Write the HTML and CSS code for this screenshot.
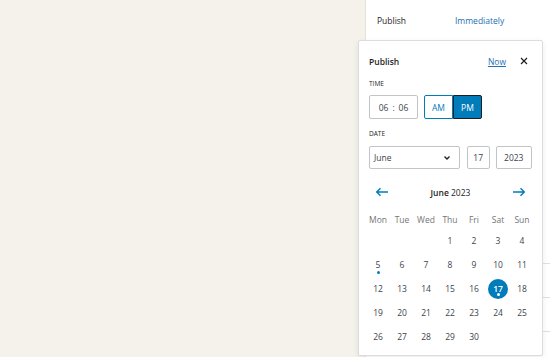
FILE: index.html
```html
<!DOCTYPE html>
<html lang="en">
<head>
  <meta charset="UTF-8" />
  <title>Publish date</title>
  <link rel="stylesheet" href="styles.css">
</head>
<body>
  <div class="editor">
    <div class="canvas"></div>

    <aside class="sidebar">
      <div class="summary-row">
        <span class="summary-label">Publish</span>
        <a class="summary-value" href="#">Immediately</a>
      </div>
      <div class="panel-filler"></div>
      <div class="panel-row"></div>
      <div class="panel-row"></div>
    </aside>

    <!-- date picker popover -->
    <div class="popover">
      <div class="pop-header">
        <h2>Publish</h2>
        <a class="now-link" href="#">Now</a>
        <button class="close-btn">
          <svg width="10" height="10" viewBox="0 0 10 10"><path d="M2 2 L8 8 M8 2 L2 8" stroke="#1e1e1e" stroke-width="1.2"/></svg>
        </button>
      </div>

      <div class="field-label">Time</div>
      <div class="time-row">
        <div class="time-box">
          <span>06</span><span class="colon">:</span><span>06</span>
        </div>
        <div class="ampm">
          <button class="ampm-btn">AM</button>
          <button class="ampm-btn active">PM</button>
        </div>
      </div>

      <div class="field-label">Date</div>
      <div class="date-row">
        <div class="date-box month">
          <span>June</span>
          <svg width="8" height="6" viewBox="0 0 8 6"><path d="M1.5 1.5 L4 4 L6.5 1.5" fill="none" stroke="#1e1e1e" stroke-width="1.3"/></svg>
        </div>
        <div class="date-box day">17</div>
        <div class="date-box year">2023</div>
      </div>

      <div class="cal-nav">
        <svg width="14" height="10" viewBox="0 0 14 10"><path d="M13 5 H2 M5.5 1.2 L1.7 5 L5.5 8.8" fill="none" stroke="#007cba" stroke-width="1.4"/></svg>
        <div class="cal-title"><strong>June</strong> 2023</div>
        <svg width="14" height="10" viewBox="0 0 14 10"><path d="M1 5 H12 M8.5 1.2 L12.3 5 L8.5 8.8" fill="none" stroke="#007cba" stroke-width="1.4"/></svg>
      </div>

      <div class="cal-grid weekdays">
        <span>Mon</span><span>Tue</span><span>Wed</span><span>Thu</span><span>Fri</span><span>Sat</span><span>Sun</span>
      </div>
      <div class="cal-grid days" id="days"></div>
    </div>
  </div>

  <script>
    const days = document.getElementById('days');
    // June 2023 starts on a Thursday
    for (let i = 0; i < 3; i++) {
      days.appendChild(document.createElement('span'));
    }
    for (let d = 1; d <= 30; d++) {
      const cell = document.createElement('span');
      cell.className = 'day-cell';
      if (d === 5) cell.classList.add('today');
      if (d === 17) cell.classList.add('selected');
      cell.innerHTML = `<span class="num">${d}</span>`;
      days.appendChild(cell);
    }
  </script>
</body>
</html>
```

FILE: styles.css
```css
body {
  margin: 0;
  font-family: 'Open Sans', 'Noto Sans', sans-serif;
  color: #1e1e1e;
  background: #f5f2eb;
}

.editor {
  display: flex;
  height: 357px;
  position: relative;
  overflow: hidden;
}

.canvas {
  flex: 1;
  background: #f5f2eb;
}

.sidebar {
  width: 184px;
  background: #fff;
  border-left: 1px solid #e4e1da;
  display: flex;
  flex-direction: column;
}

.summary-row {
  display: flex;
  align-items: center;
  height: 40px;
  padding-left: 11px;
  font-size: 8.5px;
}

.summary-label {
  width: 78px;
  color: #1e1e1e;
}

.summary-value {
  color: #2271b1;
  text-decoration: none;
}

.panel-filler {
  height: 223px;
  border-bottom: 1px solid #e0e0e0;
}

.panel-row {
  height: 33px;
  border-bottom: 1px solid #e0e0e0;
}

.popover {
  position: absolute;
  left: 358px;
  top: 40px;
  width: 163px;
  padding: 12px 10px 6px 10px;
  background: #fff;
  border: 1px solid #dcdcde;
  border-radius: 2px;
  box-shadow: 0 2px 6px rgba(0, 0, 0, 0.08);
  font-size: 8.5px;
}

.pop-header {
  display: flex;
  align-items: center;
  height: 16px;
}

.pop-header h2 {
  margin: 0;
  flex: 1;
  font-size: 8.5px;
  font-weight: 600;
}

.now-link {
  color: #2271b1;
  margin-right: 10px;
}

.close-btn {
  border: none;
  background: none;
  padding: 0;
  width: 16px;
  height: 16px;
  display: flex;
  align-items: center;
  justify-content: center;
}

.field-label {
  margin-top: 9px;
  height: 12px;
  line-height: 12px;
  font-size: 6.5px;
  font-weight: 500;
  text-transform: uppercase;
}

.time-row {
  display: flex;
  gap: 6px;
  margin-top: 5px;
  height: 24px;
}

.time-box {
  width: 47px;
  border: 1px solid #c3c4c7;
  border-radius: 2px;
  display: flex;
  align-items: center;
  justify-content: center;
  gap: 3px;
  color: #3c434a;
}

.time-box .colon {
  margin: 0 1px;
}

.ampm {
  display: flex;
}

.ampm-btn {
  width: 29px;
  height: 24px;
  padding: 0;
  font-family: inherit;
  font-size: 8.5px;
  background: #fff;
  color: #007cba;
  border: 1px solid #007cba;
}

.ampm-btn:first-child {
  border-radius: 2px 0 0 2px;
}

.ampm-btn.active {
  background: #007cba;
  color: #fff;
  border-color: #1e1e1e;
  border-radius: 0 2px 2px 0;
}

.date-row {
  display: flex;
  gap: 6px;
  margin-top: 6px;
  height: 23px;
}

.date-box {
  border: 1px solid #c3c4c7;
  border-radius: 2px;
  display: flex;
  align-items: center;
  color: #3c434a;
}

.date-box.month {
  width: 78px;
  padding: 0 8px 0 4px;
  justify-content: space-between;
  margin-right: 1px;
}

.date-box.day {
  width: 21px;
  justify-content: center;
}

.date-box.year {
  width: 35px;
  justify-content: center;
}

.cal-nav {
  display: flex;
  align-items: center;
  justify-content: space-between;
  margin-top: 12px;
  height: 22px;
  padding: 0 6px;
}

.cal-title strong {
  font-weight: 600;
}

.cal-grid {
  display: grid;
  grid-template-columns: repeat(7, 24px);
  margin: 0 -3px;
  text-align: center;
}

.weekdays {
  margin-top: 8px;
  height: 18px;
  line-height: 18px;
  color: #757575;
}

.days {
  grid-auto-rows: 24px;
  color: #3c434a;
}

.day-cell {
  display: flex;
  align-items: center;
  justify-content: center;
  position: relative;
}

.day-cell .num {
  width: 20px;
  height: 20px;
  line-height: 20px;
  border-radius: 50%;
}

.day-cell.today::after,
.day-cell.selected::after {
  content: "";
  position: absolute;
  left: 50%;
  bottom: 3px;
  width: 3px;
  height: 3px;
  margin-left: -1.5px;
  border-radius: 50%;
  background: #007cba;
}

.day-cell.selected .num {
  background: #007cba;
  color: #fff;
  font-weight: 600;
}

.day-cell.selected::after {
  background: #fff;
  bottom: 5px;
}
```
